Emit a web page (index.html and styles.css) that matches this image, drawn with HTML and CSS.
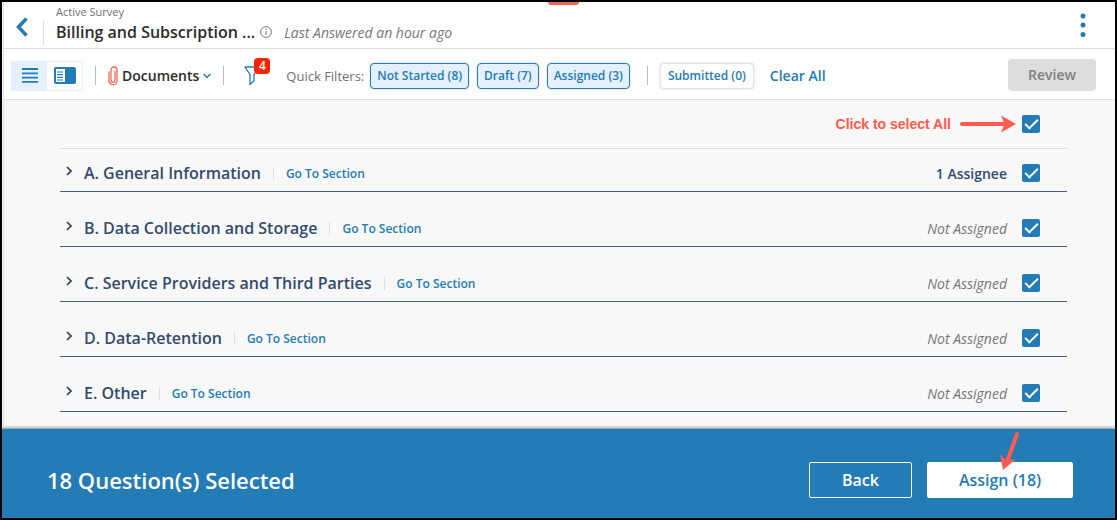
FILE: index.html
```html
<!DOCTYPE html>
<html lang="en">
<head>
    <meta charset="UTF-8">
    <meta name="viewport" content="width=device-width, initial-scale=1.0">
    <title>Billing and Subscription Survey</title>
    <link rel="stylesheet" href="styles.css">
</head>
<body>
    <div class="app">
        <header class="survey-header">
            <span class="top-tab"></span>
            <button type="button" class="icon-button back-arrow" aria-label="Go back">
                <svg width="12" height="20" viewBox="0 0 12 20"><path d="M10.5 1.5L2.5 10l8 8.500" fill="none" stroke="#237cb5" stroke-width="3.500"/></svg>
            </button>
            <div class="survey-title">
                <span class="survey-status">Active Survey</span>
                <div class="title-line">
                    <h1>Billing and Subscription ...</h1>
                    <svg class="info" width="12" height="12" viewBox="0 0 12 12"><circle cx="6" cy="6" r="5.400" fill="none" stroke="#777" stroke-width="1"/><path d="M6 5v4M6 2.700v1.300" stroke="#777" stroke-width="1.200"/></svg>
                    <em>Last Answered an hour ago</em>
                </div>
            </div>
            <button type="button" class="icon-button more" aria-label="More options">
                <svg width="6" height="24" viewBox="0 0 6 24" fill="#237cb5"><circle cx="3" cy="3" r="2.500"/><circle cx="3" cy="12" r="2.500"/><circle cx="3" cy="21.500" r="2.500"/></svg>
            </button>
        </header>

        <div class="toolbar">
            <div class="view-toggle">
                <button type="button" class="active" aria-label="List view">
                    <svg width="16" height="15" viewBox="0 0 16 15"><path d="M0 1h16M0 5.300h16M0 9.600h16M0 13.900h16" stroke="#237cb5" stroke-width="1.800"/></svg>
                </button>
                <button type="button" aria-label="Split view">
                    <svg width="22" height="17" viewBox="0 0 22 17"><rect width="22" height="17" rx="2" fill="#237cb5"/><rect x="2" y="2" width="9" height="13" fill="#fff"/><path d="M3 5h6M3 7.700h6M3 10.400h6M3 13h6" stroke="#237cb5" stroke-width="1.200"/></svg>
                </button>
            </div>
            <span class="divider"></span>
            <button type="button" class="documents">
                <svg width="10" height="20" viewBox="0 0 10 20"><path d="M7 5.500v8.700a2 2 0 0 1-4 0V4a3 3 0 0 1 6 0v10.700a4 4 0 0 1-8 0V6" fill="none" stroke="#f0694f" stroke-width="1.300" stroke-linecap="round"/></svg>
                Documents
                <svg width="8" height="6" viewBox="0 0 8 6"><path d="M.7 1L4 4.400 7.300 1" fill="none" stroke="#237cb5" stroke-width="1.500"/></svg>
            </button>
            <span class="divider"></span>
            <button type="button" class="icon-button filter" aria-label="Filters">
                <svg width="16" height="20" viewBox="0 0 16 20"><path d="M1 1h14L10 8.500V15l-4 3.500v-10z" fill="none" stroke="#237cb5" stroke-width="1.300" stroke-linejoin="round"/></svg>
                <span class="badge">4</span>
            </button>
            <span class="filter-label">Quick Filters:</span>
            <div class="chips">
                <button type="button" class="chip on">Not Started (8)</button>
                <button type="button" class="chip on">Draft (7)</button>
                <button type="button" class="chip on">Assigned (3)</button>
            </div>
            <span class="divider chip-divider"></span>
            <button type="button" class="chip submitted">Submitted (0)</button>
            <a href="#" class="clear">Clear All</a>
            <button type="button" class="review" disabled>Review</button>
        </div>

        <main class="sections">
            <div class="select-all">
                <label for="select-all">Click to select All</label>
                <svg width="56" height="18" viewBox="0 0 56 18"><path d="M2 9h42" stroke="#ff5a4d" stroke-width="4" stroke-linecap="round"/><path d="M56 9L41 .5l3.500 8.500L41 17.500z" fill="#ff5a4d"/></svg>
                <input type="checkbox" id="select-all" checked>
            </div>

            <div class="section-list">
                <div class="section">
                    <button type="button" class="icon-button expand" aria-label="Expand section A"><svg width="6" height="10" viewBox="0 0 6 10"><path d="M1 1l4 4-4 4" fill="none" stroke="#263f5f" stroke-width="1.600"/></svg></button>
                    <h2>A. General Information</h2>
                    <a href="#">Go To Section</a>
                    <label for="section-a" class="assigned">1 Assignee</label>
                    <input type="checkbox" id="section-a" checked>
                </div>
                <div class="section">
                    <button type="button" class="icon-button expand" aria-label="Expand section B"><svg width="6" height="10" viewBox="0 0 6 10"><path d="M1 1l4 4-4 4" fill="none" stroke="#263f5f" stroke-width="1.600"/></svg></button>
                    <h2>B. Data Collection and Storage</h2>
                    <a href="#">Go To Section</a>
                    <label for="section-b">Not Assigned</label>
                    <input type="checkbox" id="section-b" checked>
                </div>
                <div class="section">
                    <button type="button" class="icon-button expand" aria-label="Expand section C"><svg width="6" height="10" viewBox="0 0 6 10"><path d="M1 1l4 4-4 4" fill="none" stroke="#263f5f" stroke-width="1.600"/></svg></button>
                    <h2>C. Service Providers and Third Parties</h2>
                    <a href="#">Go To Section</a>
                    <label for="section-c">Not Assigned</label>
                    <input type="checkbox" id="section-c" checked>
                </div>
                <div class="section">
                    <button type="button" class="icon-button expand" aria-label="Expand section D"><svg width="6" height="10" viewBox="0 0 6 10"><path d="M1 1l4 4-4 4" fill="none" stroke="#263f5f" stroke-width="1.600"/></svg></button>
                    <h2>D. Data-Retention</h2>
                    <a href="#">Go To Section</a>
                    <label for="section-d">Not Assigned</label>
                    <input type="checkbox" id="section-d" checked>
                </div>
                <div class="section">
                    <button type="button" class="icon-button expand" aria-label="Expand section E"><svg width="6" height="10" viewBox="0 0 6 10"><path d="M1 1l4 4-4 4" fill="none" stroke="#263f5f" stroke-width="1.600"/></svg></button>
                    <h2>E. Other</h2>
                    <a href="#">Go To Section</a>
                    <label for="section-e">Not Assigned</label>
                    <input type="checkbox" id="section-e" checked>
                </div>
            </div>
        </main>

        <footer class="action-bar">
            <p>18 Question(s) Selected</p>
            <button type="button" class="back">Back</button>
            <button type="button" class="assign">Assign (18)
                <svg class="pointer" width="22" height="40" viewBox="0 0 22 40"><path d="M18 3L9 28" stroke="#ff5a4d" stroke-width="4" stroke-linecap="round"/><path d="M4 39L1 23l6 6 10-1z" fill="#ff5a4d"/></svg>
            </button>
        </footer>
    </div>
</body>
</html>
```
FILE: styles.css
```css
* {
    box-sizing: border-box;
}

body {
    margin: 0;
    font-family: "Open Sans", sans-serif;
    font-size: 14px;
    color: #2b2b2b;
}

button {
    font-family: inherit;
    cursor: pointer;
}

svg {
    display: block;
    flex: none;
}

a {
    color: #237cb5;
    font-weight: 600;
    text-decoration: none;
}

.app {
    display: flex;
    flex-direction: column;
    min-height: 100vh;
    border: 2px solid #000;
    background: #f8f8f8;
}

.icon-button {
    padding: 0;
    border: none;
    background: none;
}

/* Header */
.survey-header {
    position: relative;
    display: flex;
    align-items: center;
    height: 47px;
    padding: 0 29px 1px 12px;
    margin-left: 1px;
    border-left: 1px solid #dce4e8;
    border-bottom: 1px solid #d5dfe3;
    background: #fff;
}

.top-tab {
    position: absolute;
    top: 0;
    left: 49%;
    width: 31px;
    height: 3px;
    border-radius: 0 0 6px 6px;
    background: #f0694f;
}

.back-arrow {
    margin-top: 4px;
}

.survey-title {
    margin-left: 15px;
    padding-left: 13px;
    background: linear-gradient(#d5dfe3, #d5dfe3) left bottom / 1px 24px no-repeat;
}

.survey-status {
    display: block;
    font-size: 11px;
    line-height: 14px;
    color: #6f6f6f;
}

.title-line {
    display: flex;
    align-items: center;
    line-height: 24px;
}

.title-line h1 {
    margin: 0;
    font-size: 16px;
    font-weight: 600;
}

.title-line em {
    padding-top: 2px;
    color: #777;
}

.info {
    margin: 0 12px 0 5px;
}

.more {
    margin-left: auto;
}

/* Toolbar */
.toolbar {
    display: flex;
    align-items: center;
    height: 51px;
    padding: 3px 19px 0 7px;
    margin-left: 1px;
    border-left: 1px solid #dce4e8;
    border-bottom: 1px solid #dde2e4;
    background: #fff;
    white-space: nowrap;
}

.view-toggle {
    display: flex;
    height: 30px;
    border: 1px solid #e4f0fd;
}

.view-toggle button {
    display: flex;
    align-items: center;
    justify-content: center;
    width: 35px;
    padding: 0;
    border: none;
    background: #fff;
}

.view-toggle .active {
    background: #e4f0fd;
}

.divider {
    width: 1px;
    height: 19px;
    margin: 0 12px;
    background: #bbb;
}

.documents {
    display: flex;
    align-items: center;
    gap: 4px;
    padding: 0;
    border: none;
    background: none;
    font-size: 14px;
    font-weight: 600;
    color: #2b2b2b;
}

.filter {
    position: relative;
    margin: 0 26px 0 8px;
}

.badge {
    position: absolute;
    top: -8px;
    left: 10px;
    width: 16px;
    border-radius: 4px;
    background: #f20;
    color: #fff;
    font-size: 12px;
    font-weight: 600;
    line-height: 16px;
}

.filter-label {
    margin-right: 6px;
    font-size: 13px;
    color: #6f6f6f;
}

.chips {
    display: flex;
    gap: 8px;
}

.chip {
    height: 26px;
    padding: 0 6px;
    border: 1px solid #e4e4e4;
    border-radius: 4px;
    background: #fff;
    box-shadow: 0 0 3px rgba(0, 0, 0, 0.15);
    color: #237cb5;
    font-size: 12px;
    font-weight: 600;
}

.chip.on {
    border-color: #237cb5;
    background: #e4f0fd;
}

.chip-divider {
    margin: 0 12px 0 17px;
}

.submitted {
    padding: 0 7px;
}

.clear {
    margin-left: 16px;
}

.review {
    width: 88px;
    height: 32px;
    margin: 0 0 2px auto;
    border: none;
    border-radius: 4px;
    background: #ddd;
    color: #808080;
    font-size: 14px;
    font-weight: 600;
}

/* Section list */
.sections {
    flex: 1;
    margin-left: 1px;
    padding: 0 48px 0 56px;
    border-left: 1px solid #dce4e8;
}

.select-all {
    display: flex;
    align-items: center;
    justify-content: flex-end;
    height: 49px;
    padding-right: 27px;
    border-bottom: 1px solid #dedede;
}

.select-all label {
    margin-right: 9px;
    color: #ff5a4d;
    font-family: "Liberation Sans", sans-serif;
    font-weight: bold;
}

.select-all svg {
    margin-right: 6px;
}

.section-list {
    display: flex;
    flex-direction: column;
    gap: 18px;
    padding: 6px 0 17px;
}

.section {
    display: flex;
    align-items: center;
    height: 37px;
    padding: 0 27px 0 6px;
    border-bottom: 1px solid #43608a;
}

.expand {
    margin: 0 12px 4px 0;
}

.section h2 {
    margin: 0;
    font-size: 16px;
    font-weight: 600;
    color: #324b6e;
}

.section a {
    margin-left: 12px;
    padding-left: 12px;
    border-left: 1px solid #dedede;
    font-size: 12px;
    line-height: 13px;
}

.section label {
    margin: 0 15px 0 auto;
    font-style: italic;
    color: #777;
}

.section .assigned {
    font-style: normal;
    font-weight: 600;
    color: #324b6e;
}

input[type="checkbox"] {
    appearance: none;
    display: grid;
    place-items: center;
    width: 18px;
    height: 18px;
    margin: 0;
    border-radius: 2px;
    background: #237cb5;
}

/* Tick mark */
input[type="checkbox"]:checked::before {
    content: "";
    box-sizing: border-box;
    width: 13px;
    height: 7px;
    margin-bottom: 4px;
    border: solid #fff;
    border-width: 0 0 2px 2px;
    transform: rotate(-45deg);
}

/* Bottom bar */
.action-bar {
    display: flex;
    align-items: center;
    gap: 15px;
    height: 89px;
    padding: 12px 42px 0 45px;
    background: #237cb5;
    box-shadow: 0 -1px 3px rgba(0, 0, 0, 0.5);
    color: #fff;
}

.action-bar p {
    margin: 0 auto 0 0;
    font-size: 22px;
    font-weight: 600;
}

.action-bar button {
    height: 36px;
    border: 1px solid #fff;
    border-radius: 2px;
    font-size: 16px;
    font-weight: 600;
}

.back {
    width: 103px;
    background: #237cb5;
    color: #fff;
}

.assign {
    position: relative;
    width: 146px;
    background: #fff;
    color: #237cb5;
}

.pointer {
    position: absolute;
    top: -32px;
    left: 71px;
}
```
